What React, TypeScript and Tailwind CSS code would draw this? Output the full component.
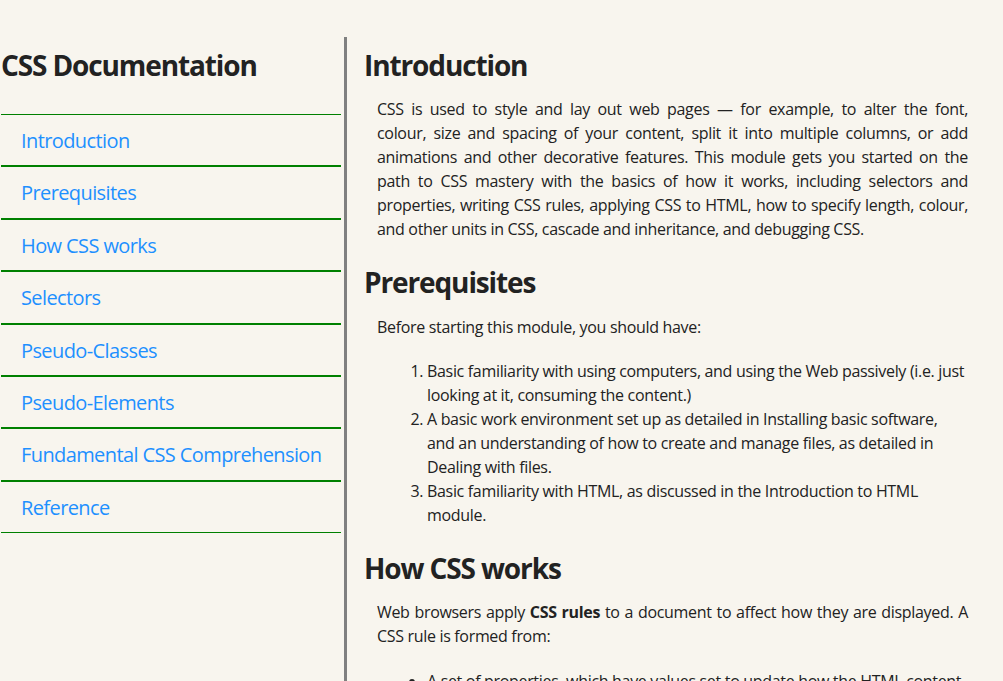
const navItems = [
  "Introduction",
  "Prerequisites",
  "How CSS works",
  "Selectors",
  "Pseudo-Classes",
  "Pseudo-Elements",
  "Fundamental CSS Comprehension",
  "Reference",
];

// intro lines kept as in the original layout
const introLines = [
  "CSS is used to style and lay out web pages — for example, to alter the font,",
  "colour, size and spacing of your content, split it into multiple columns, or add",
  "animations and other decorative features. This module gets you started on the",
  "path to CSS mastery with the basics of how it works, including selectors and",
  "properties, writing CSS rules, applying CSS to HTML, how to specify length, colour,",
];

export default function App() {
  return (
    <div
      className="flex h-[681px] overflow-hidden bg-[#f8f5ee] pt-[37px] text-[#222]"
      style={{ fontFamily: '"Open Sans", "Noto Sans", sans-serif' }}
    >
      <aside className="w-[344px] shrink-0">
        <h1 className="mt-[11px] pl-[1px] text-[28px] leading-[34px] font-bold tracking-[-0.04em]">CSS Documentation</h1>
        <ul className="ml-[1px] mt-[32px] w-[340px]">
          {navItems.map((item) => (
            <li key={item} className="border-y border-[#008000] pt-[11px] pb-[9px] pl-[20px] text-[20px] leading-[30.4px] tracking-[-0.03em]">
              <a href={"#" + item} className="text-[#1e90ff]">
                {item}
              </a>
            </li>
          ))}
        </ul>
      </aside>

      <main className="flex-1 border-l-[3px] border-[#808080] pl-[17px] pr-[35px]">
        <h2 className="mt-[11px] text-[28px] leading-[34px] font-bold tracking-[-0.04em]">Introduction</h2>
        <p className="mt-[15px] pl-[13px] text-[16px] leading-[24px] tracking-[-0.02em]">
          {introLines.map((line) => (
            <span key={line} className="block whitespace-nowrap text-justify [text-align-last:justify]">
              {line}
            </span>
          ))}
          <span className="block">and other units in CSS, cascade and inheritance, and debugging CSS.</span>
        </p>

        <h2 className="mt-[24px] text-[28px] leading-[34px] font-bold tracking-[-0.04em]">Prerequisites</h2>
        <div className="pl-[13px] text-[16px] leading-[24px] tracking-[-0.02em]">
          <p className="mt-[16px] text-justify">Before starting this module, you should have:</p>
          <ol className="mt-[20px] list-decimal pl-[50px]">
            <li>
              Basic familiarity with using computers, and using the Web passively (i.e. just looking at it, consuming the
              content.)
            </li>
            <li>
              A basic work environment set up as detailed in Installing basic software, and an understanding of how to
              create and manage files, as detailed in Dealing with files.
            </li>
            <li>Basic familiarity with HTML, as discussed in the Introduction to HTML module.</li>
          </ol>
        </div>

        <h2 className="mt-[24px] text-[28px] leading-[34px] font-bold tracking-[-0.04em]">How CSS works</h2>
        <div className="pl-[13px] text-[16px] leading-[24px] tracking-[-0.02em]">
          <p className="mt-[15px] text-justify">
            Web browsers apply <strong>CSS rules</strong> to a document to affect how they are displayed. A CSS rule is
            formed from:
          </p>
          <ul className="mt-[21px] list-disc pl-[50px]">
            <li>
              A set of properties, which have values set to update how the HTML content is displayed, for example I want
              my element's width to be 50% of its parent element, and its background to be red.
            </li>
            <li>
              A selector, which selects the element(s) you want to apply the updated property values to. For example, I
              want to apply my CSS rule to all the paragraphs in my HTML document.
            </li>
          </ul>
        </div>
      </main>
    </div>
  );
}
